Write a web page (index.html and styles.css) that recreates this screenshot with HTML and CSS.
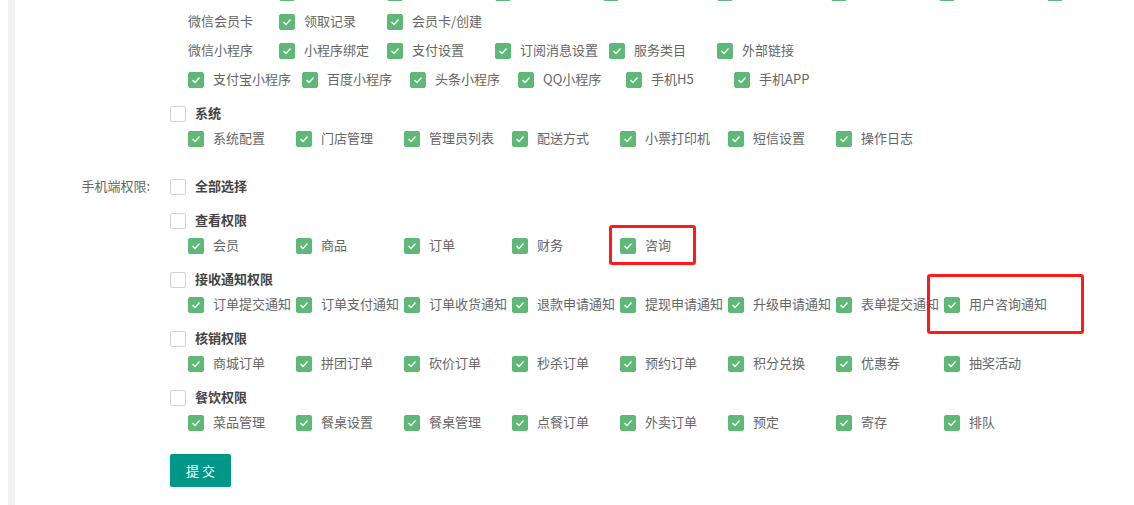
FILE: index.html
```html
<!DOCTYPE html>
<html lang="zh-CN">
<head>
  <meta charset="UTF-8" />
  <meta name="viewport" content="width=device-width, initial-scale=1.0"/>
  <title>权限设置</title>
  <link rel="stylesheet" href="styles.css">
</head>
<body>
  <div class="page">
    <form class="perm-form">
      <div class="form-item">
        <div class="form-label"></div>
        <div class="form-block">
          <div class="group">
            <div class="row">
              <span class="row-name">微信公众号</span>
              <span class="cb loose on"><i></i>公众号绑定</span>
              <span class="cb loose on"><i></i>菜单管理</span>
              <span class="cb loose on"><i></i>自动回复</span>
              <span class="cb loose on"><i></i>模板消息设置</span>
              <span class="cb loose on"><i></i>公众号粉丝列</span>
              <span class="cb loose on"><i></i>素材管理</span>
              <span class="cb loose on"><i></i>群发消息</span>
              <span class="cb loose on"><i></i>二维码</span>
            </div>
            <div class="row">
              <span class="row-name">微信会员卡</span>
              <span class="cb loose on"><i></i>领取记录</span>
              <span class="cb loose on"><i></i>会员卡/创建</span>
            </div>
            <div class="row">
              <span class="row-name">微信小程序</span>
              <span class="cb loose on"><i></i>小程序绑定</span>
              <span class="cb loose on"><i></i>支付设置</span>
              <span class="cb loose on"><i></i>订阅消息设置</span>
              <span class="cb loose on"><i></i>服务类目</span>
              <span class="cb loose on"><i></i>外部链接</span>
            </div>
            <div class="row">
              <span class="cb loose on"><i></i>支付宝小程序</span>
              <span class="cb loose on"><i></i>百度小程序</span>
              <span class="cb loose on"><i></i>头条小程序</span>
              <span class="cb loose on"><i></i>QQ小程序</span>
              <span class="cb loose on"><i></i>手机H5</span>
              <span class="cb loose on"><i></i>手机APP</span>
            </div>
          </div>

          <div class="group">
            <div class="group-head"><span class="cb"><i></i>系统</span></div>
            <div class="row">
              <span class="cb on"><i></i>系统配置</span>
              <span class="cb on"><i></i>门店管理</span>
              <span class="cb on"><i></i>管理员列表</span>
              <span class="cb on"><i></i>配送方式</span>
              <span class="cb on"><i></i>小票打印机</span>
              <span class="cb on"><i></i>短信设置</span>
              <span class="cb on"><i></i>操作日志</span>
            </div>
          </div>
        </div>
      </div>

      <div class="form-item tight">
        <div class="form-label">手机端权限:</div>
        <div class="form-block">
          <div class="group">
            <div class="group-head solo"><span class="cb"><i></i>全部选择</span></div>
          </div>

          <div class="group">
            <div class="group-head"><span class="cb"><i></i>查看权限</span></div>
            <div class="row">
              <span class="cb on"><i></i>会员</span>
              <span class="cb on"><i></i>商品</span>
              <span class="cb on"><i></i>订单</span>
              <span class="cb on"><i></i>财务</span>
              <span class="cb on"><i></i>咨询</span>
            </div>
          </div>

          <div class="group">
            <div class="group-head"><span class="cb"><i></i>接收通知权限</span></div>
            <div class="row">
              <span class="cb on"><i></i>订单提交通知</span>
              <span class="cb on"><i></i>订单支付通知</span>
              <span class="cb on"><i></i>订单收货通知</span>
              <span class="cb on"><i></i>退款申请通知</span>
              <span class="cb on"><i></i>提现申请通知</span>
              <span class="cb on"><i></i>升级申请通知</span>
              <span class="cb on"><i></i>表单提交通知</span>
              <span class="cb on"><i></i>用户咨询通知</span>
            </div>
          </div>

          <div class="group">
            <div class="group-head"><span class="cb"><i></i>核销权限</span></div>
            <div class="row">
              <span class="cb on"><i></i>商城订单</span>
              <span class="cb on"><i></i>拼团订单</span>
              <span class="cb on"><i></i>砍价订单</span>
              <span class="cb on"><i></i>秒杀订单</span>
              <span class="cb on"><i></i>预约订单</span>
              <span class="cb on"><i></i>积分兑换</span>
              <span class="cb on"><i></i>优惠券</span>
              <span class="cb on"><i></i>抽奖活动</span>
            </div>
          </div>

          <div class="group">
            <div class="group-head"><span class="cb"><i></i>餐饮权限</span></div>
            <div class="row">
              <span class="cb on"><i></i>菜品管理</span>
              <span class="cb on"><i></i>餐桌设置</span>
              <span class="cb on"><i></i>餐桌管理</span>
              <span class="cb on"><i></i>点餐订单</span>
              <span class="cb on"><i></i>外卖订单</span>
              <span class="cb on"><i></i>预定</span>
              <span class="cb on"><i></i>寄存</span>
              <span class="cb on"><i></i>排队</span>
            </div>
          </div>
        </div>
      </div>

      <div class="form-item">
        <div class="form-label"></div>
        <div class="form-block">
          <button type="button" class="btn">提 交</button>
        </div>
      </div>
    </form>

    <!-- annotation boxes from the screenshot -->
    <div class="mark mark-view"></div>
    <div class="mark mark-notice"></div>
  </div>
</body>
</html>
```

FILE: styles.css
```css
body {
  margin: 0;
  background: #fff;
  font-family: "Noto Sans CJK SC", "Liberation Sans", sans-serif;
  font-size: 13px;
  color: #666;
}
.page {
  position: relative;
  margin-left: 8px;
  border-left: 7px solid #f2f2f2;
  min-height: 100vh;
  overflow: hidden;
}
.perm-form {
  margin-top: -15px;
}
.form-item {
  display: flex;
  margin-bottom: 14px;
}
.form-item.tight {
  margin-bottom: 5px;
}
.form-label {
  width: 155px;
  flex-shrink: 0;
  box-sizing: border-box;
  padding-right: 20px;
  text-align: right;
  line-height: 14px;
  color: #666;
}
.form-block {
  flex: 1;
}
.group {
  margin-bottom: 18px;
}
.group-head {
  height: 16px;
  margin-bottom: 9px;
  font-weight: bold;
  color: #444;
}
.group-head.solo {
  margin-bottom: 0;
}
.row {
  display: flex;
  height: 16px;
  margin-left: 18px;
  margin-bottom: 13px;
  white-space: nowrap;
}
.row:last-child {
  margin-bottom: 0;
}
.row-name {
  width: 91px;
  flex-shrink: 0;
  line-height: 14px;
}
.cb {
  display: inline-flex;
  align-items: flex-start;
  height: 16px;
  line-height: 14px;
  flex-shrink: 0;
}
.row .cb {
  width: 108px;
}
.row .cb.loose {
  width: auto;
  min-width: 108px;
  padding-right: 11px;
  box-sizing: border-box;
}
.cb i {
  width: 16px;
  height: 16px;
  margin-right: 9px;
  box-sizing: border-box;
  border: 1px solid #d2d2d2;
  border-radius: 2px;
  background: #fff;
  flex-shrink: 0;
}
.cb.on i {
  border-color: #5fb878;
  background: #5fb878 url("data:image/svg+xml,%3Csvg xmlns='http://www.w3.org/2000/svg' width='16' height='16'%3E%3Cpolyline points='4.5,8 7,10.5 11.5,5.5' fill='none' stroke='%23fff' stroke-width='1.3'/%3E%3C/svg%3E") center / 16px 16px no-repeat;
}
.btn {
  width: 61px;
  height: 33px;
  padding: 0;
  border: none;
  border-radius: 2px;
  background: #009688;
  color: #fff;
  font-family: inherit;
  font-size: 13px;
  cursor: pointer;
}
.mark {
  position: absolute;
  border: 3px solid #ff1a1a;
  border-radius: 3px;
  box-sizing: border-box;
}
.mark-view {
  left: 594px;
  top: 225px;
  width: 87px;
  height: 40px;
}
.mark-notice {
  left: 912px;
  top: 274px;
  width: 157px;
  height: 60px;
}
```
